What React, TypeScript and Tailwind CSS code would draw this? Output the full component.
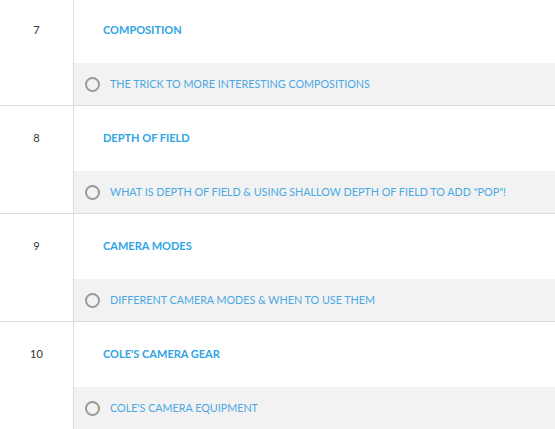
const sections = [
  { num: "7", title: "Composition", lesson: "The trick to more interesting compositions" },
  { num: "8", title: "Depth of Field", lesson: 'What is depth of field & using shallow depth of field to add "pop"!' },
  { num: "9", title: "Camera Modes", lesson: "Different camera modes & when to use them" },
  { num: "10", title: "Cole's Camera Gear", lesson: "Cole's camera equipment" },
];

export default function App() {
  return (
    <div className="w-[555px] h-[429px] overflow-hidden bg-white font-['Lato',sans-serif]">
      <div className="-mt-[2px]">
        {sections.map((s) => (
          <div key={s.num} className="flex border-b border-[#dcdcdc]">
            <div className="w-[74px] shrink-0 border-r border-[#dcdcdc] flex justify-center pt-[24px] text-[11px] text-[#333]">
              {s.num}
            </div>
            <div className="flex-1 flex flex-col">
              <div className="h-[65px] flex items-center pl-[29px]">
                <h3 className="text-[11px] font-bold uppercase text-[#2fa4e4]">{s.title}</h3>
              </div>
              <div className="h-[42px] bg-[#f2f2f2] flex items-center pl-[11px] gap-[10px]">
                <span className="w-[15px] h-[15px] rounded-full border-2 border-[#9a9a9a] shrink-0"></span>
                <span className="text-[10.75px] uppercase text-[#4aa9e4]">{s.lesson}</span>
              </div>
            </div>
          </div>
        ))}
      </div>
    </div>
  );
}
